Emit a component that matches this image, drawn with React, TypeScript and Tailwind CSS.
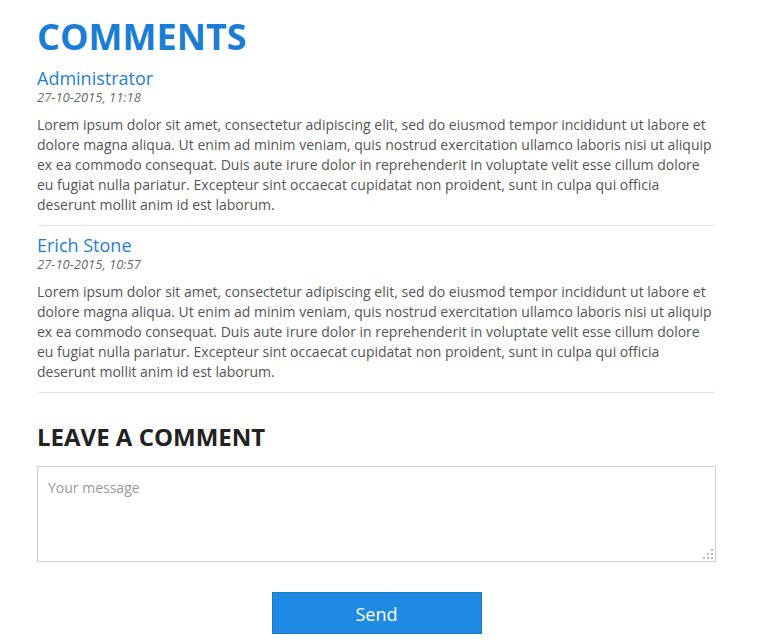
const lorem =
  "Lorem ipsum dolor sit amet, consectetur adipiscing elit, sed do eiusmod tempor incididunt ut labore et dolore magna aliqua. Ut enim ad minim veniam, quis nostrud exercitation ullamco laboris nisi ut aliquip ex ea commodo consequat. Duis aute irure dolor in reprehenderit in voluptate velit esse cillum dolore eu fugiat nulla pariatur. Excepteur sint occaecat cupidatat non proident, sunt in culpa qui officia deserunt mollit anim id est laborum.";

const comments = [
  { name: "Administrator", date: "27-10-2015, 11:18", text: lorem },
  { name: "Erich Stone", date: "27-10-2015, 10:57", text: lorem },
];

function Comment({ name, date, text }: { name: string; date: string; text: string }) {
  return (
    <div className="border-b border-[#e3e3e3] rounded-b-[3px] pb-[10px] pt-[9px] first:pt-0">
      <p className="text-[18px] leading-[21px] text-[#1f80d6]">{name}</p>
      <p className="text-[13px] leading-[17px] italic text-[#6a6a6a]">{date}</p>
      <p className="mt-[9px] text-[14px] leading-[20px] text-[#555]">{text}</p>
    </div>
  );
}

function Grip() {
  const dots = [
    [8, 0],
    [4, 4],
    [8, 4],
    [0, 8],
    [4, 8],
    [8, 8],
  ];
  return (
    <div className="absolute right-[3px] bottom-[3px] w-[10px] h-[10px] pointer-events-none">
      {dots.map(([x, y], i) => (
        <span
          key={i}
          className="absolute w-[2px] h-[2px] bg-[#b8b8b8]"
          style={{ left: x, top: y }}
        />
      ))}
    </div>
  );
}

export default function App() {
  return (
    <div className="bg-white min-h-[640px] font-['Open_Sans',sans-serif]">
      <div className="ml-[37px] w-[679px] pt-[17px]">
        <h1 className="text-[36px] leading-[40px] font-bold text-[#1b7dd4]">COMMENTS</h1>
        <div className="mt-[11px]">
          {comments.map((c) => (
            <Comment key={c.name} {...c} />
          ))}
        </div>
        <h2 className="mt-[29px] text-[24px] leading-[30px] font-bold text-[#222]">
          LEAVE A COMMENT
        </h2>
        <div className="relative mt-[14px]">
          <textarea
            className="block w-full h-[96px] resize-none border border-[#cfcfd4] px-[10px] py-[11px] text-[14px] leading-[20px] text-[#555] placeholder:text-[#999] outline-none"
            placeholder="Your message"
          />
          <Grip />
        </div>
        <div className="mt-[30px] flex justify-center">
          <button className="w-[210px] h-[42px] bg-[#1e8ae4] border border-[#1a7cc9] text-white text-[18px] leading-[24px] pt-[2px]">
            Send
          </button>
        </div>
      </div>
    </div>
  );
}
